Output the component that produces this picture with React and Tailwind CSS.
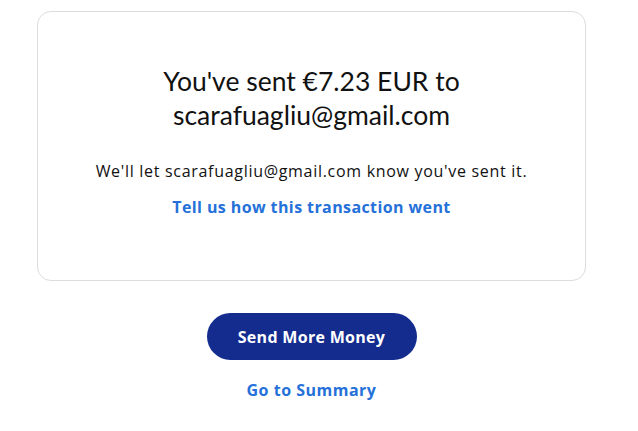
import React from 'react';

const App = () => {
  return (
    <div className="min-h-screen bg-white font-['Open_Sans',sans-serif] text-[#111]">
      <div className="ml-[37px] w-[549px] pt-[11px]">
        <div className="rounded-[14px] border border-[#dcdcdc] h-[270px] flex flex-col items-center pt-[52px] text-center">
          <h1 className="font-['Lato',sans-serif] text-[26.5px] leading-[34px] font-normal text-[#111] w-[340px]">
            You've sent €7.23 EUR to scarafuagliu@gmail.com
          </h1>
          <p className="mt-[28px] text-[16px] leading-[22px] tracking-[0.7px]">
            We'll let scarafuagliu@gmail.com know you've sent it.
          </p>
          <a href="#" className="mt-[14px] text-[16px] leading-[22px] font-bold tracking-[0.4px] text-[#2571d9]">
            Tell us how this transaction went
          </a>
        </div>

        <div className="flex flex-col items-center mt-[32px]">
          <button className="w-[210px] h-[47px] rounded-full bg-[#142c8e] text-white text-[16px] font-bold tracking-[0.3px]">
            Send More Money
          </button>
          <a href="#" className="mt-[18px] text-[16px] leading-[24px] font-bold tracking-[0.5px] text-[#2571d9]">
            Go to Summary
          </a>
        </div>
      </div>
    </div>
  );
};

export default App;
